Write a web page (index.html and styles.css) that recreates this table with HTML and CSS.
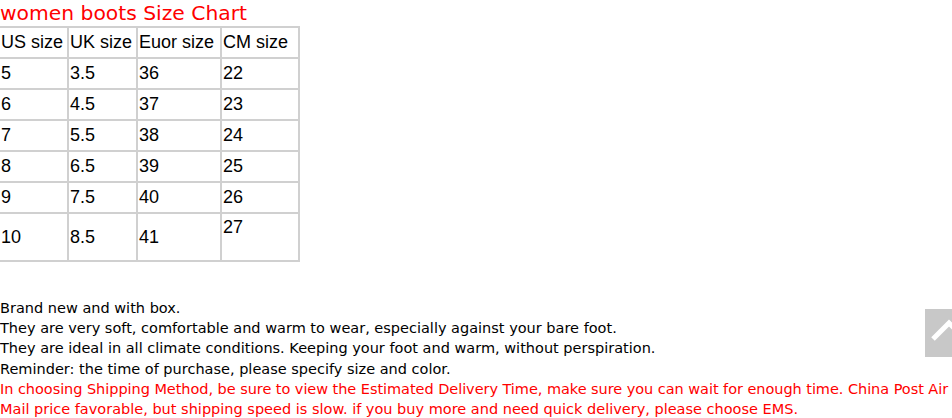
FILE: index.html
```html
<!DOCTYPE html>
<html>
<head>
<meta charset="utf-8">
<link rel="stylesheet" href="styles.css">
</head>
<body>
<div class="title">women boots Size Chart</div>
<table class="chart">
  <colgroup><col class="c1"><col class="c2"><col class="c3"><col class="c4"></colgroup>
  <tr><td>US size</td><td>UK size</td><td>Euor size</td><td>CM size</td></tr>
  <tr><td>5</td><td>3.5</td><td>36</td><td>22</td></tr>
  <tr><td>6</td><td>4.5</td><td>37</td><td>23</td></tr>
  <tr><td>7</td><td>5.5</td><td>38</td><td>24</td></tr>
  <tr><td>8</td><td>6.5</td><td>39</td><td>25</td></tr>
  <tr><td>9</td><td>7.5</td><td>40</td><td>26</td></tr>
  <tr class="last"><td>10</td><td>8.5</td><td>41</td><td class="top">27</td></tr>
</table>
<div class="desc">
  <div class="line">Brand new and with box.</div>
  <div class="line">They are very soft, comfortable and warm to wear, especially against your bare foot.</div>
  <div class="line">They are ideal in all climate conditions. Keeping your foot and warm, without perspiration.</div>
  <div class="line">Reminder: the time of purchase, please specify size and color.</div>
  <div class="line red r1">In choosing Shipping Method, be sure to view the Estimated Delivery Time, make sure you can wait for enough time. China Post Air</div>
  <div class="line red">Mail price favorable, but shipping speed is slow. if you buy more and need quick delivery, please choose EMS.</div>
</div>
<div class="totop">
  <svg width="48" height="48" viewBox="0 0 48 48"><polyline points="8,30 24,14 40,30" fill="none" stroke="#fff" stroke-width="5"/></svg>
</div>
</body>
</html>
```
FILE: styles.css
```css
html, body {
  margin: 0;
  padding: 0;
  background: #fff;
  overflow: hidden;
}
body {
  width: 952px;
  height: 418px;
  position: relative;
  font-family: "DejaVu Sans", sans-serif;
  color: #000;
}
.title {
  color: #ff0000;
  font-size: 20.3px;
  line-height: 26px;
  height: 26px;
  white-space: nowrap;
}
.chart {
  border-collapse: collapse;
  table-layout: fixed;
  width: 299px;
  font-family: "Liberation Sans", Arial, sans-serif;
  font-size: 18px;
  line-height: 21px;
  color: #000;
}
.chart .c1 { width: 68px; }
.chart .c2 { width: 69px; }
.chart .c3 { width: 84px; }
.chart .c4 { width: 78px; }
.chart td {
  border: 2px solid #d0d0d0;
  padding: 0 0 0 1px;
  height: 31px;
  box-sizing: border-box;
  vertical-align: middle;
  white-space: nowrap;
  overflow: visible;
}
.chart td:first-child { border-left: none; }
.chart tr.last td { height: 48px; }
.chart td.top { vertical-align: top; padding-top: 3px; }
.desc {
  margin-top: 36px;
  font-size: 14.5px;
  line-height: 20.2px;
}
.line { white-space: nowrap; }
.red { color: #ff0000; }
.r1 { letter-spacing: -0.05px; }
.totop {
  position: absolute;
  left: 925px;
  top: 309px;
  width: 48px;
  height: 48px;
  background: #c8c8c8;
}
.totop svg { display: block; }
```
